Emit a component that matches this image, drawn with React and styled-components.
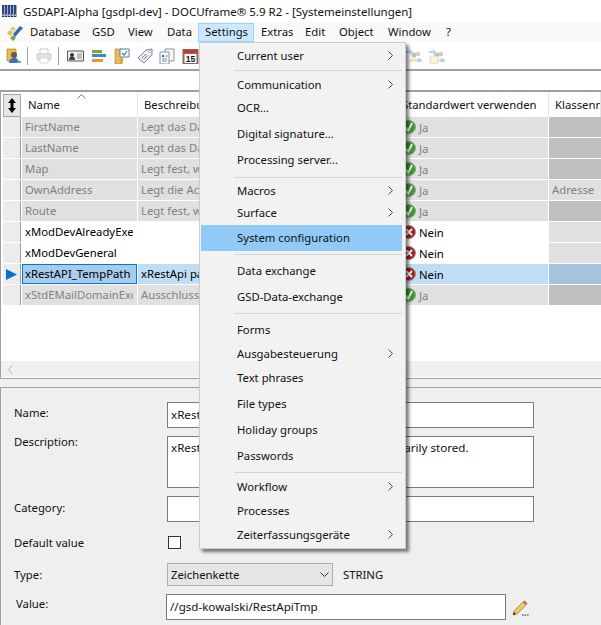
import React from 'react';
import styled, { createGlobalStyle } from 'styled-components';

const GlobalStyle = createGlobalStyle`
  html, body {
    margin: 0;
    padding: 0;
    background: #fff;
  }
  body {
    font-family: "Noto Sans", "Open Sans", sans-serif;
    font-size: 11.3px;
    color: #111;
  }
`;

const Page = styled.div`
  position: relative;
  width: 601px;
  height: 625px;
  overflow: hidden;
  display: flex;
  flex-direction: column;
  background: #fff;
`;

const TitleBar = styled.div`
  height: 22px;
  display: flex;
  align-items: center;
  gap: 6px;
  padding-left: 2px;
  font-size: 11.5px;
  white-space: nowrap;
`;

const MenuBar = styled.div`
  height: 19px;
  padding-top: 1px;
  display: flex;
  padding-left: 6px;
  background: #f9f9f9;
`;

const AppMenuIcon = styled.div`
  width: 17px;
  display: flex;
  align-items: center;
`;

const MenuBarItem = styled.div`
  width: ${(p) => p.$width}px;
  height: 19px;
  box-sizing: border-box;
  padding-left: ${(p) => (p.$open ? 6 : 7)}px;
  line-height: ${(p) => (p.$open ? 16 : 18)}px;
  white-space: nowrap;
  background: ${(p) => (p.$open ? '#cce8ff' : 'transparent')};
  border: ${(p) => (p.$open ? '1px solid #99d1ff' : 'none')};
`;

const Toolbar = styled.div`
  height: 27px;
  display: flex;
  align-items: center;
  padding-left: 6px;
  border-bottom: 2px solid #a0a0a0;
`;

const ToolIcon = styled.div`
  width: 16px;
  height: 16px;
  margin-right: ${(p) => p.$after ?? 7}px;
  margin-left: ${(p) => p.$before ?? 0}px;
  opacity: ${(p) => (p.$faded ? 0.45 : 1)};
  flex: none;
`;

const ToolSep = styled.div`
  width: 1px;
  height: 18px;
  background: #a0a0a0;
  margin-right: 8px;
  flex: none;
`;

const FilterBand = styled.div`
  height: 19px;
  border-bottom: 2px solid #a0a0a0;
`;

const GridArea = styled.div`
  flex: none;
  height: 287px;
  display: flex;
  flex-direction: column;
  border-left: 1px solid #a0a0a0;
  border-bottom: 1px solid #a0a0a0;
  box-sizing: border-box;
  padding: 0 0 1px 2px;
`;

const HeaderRow = styled.div`
  height: 25px;
  display: flex;
  align-items: stretch;
`;

const Corner = styled.div`
  width: 18px;
  height: 23px;
  margin-top: 2px;
  box-sizing: border-box;
  margin-right: 1px;
  background: #e6e6e6;
  border: 1px solid #a6a6a6;
  display: flex;
  align-items: center;
  justify-content: center;
`;

const HeaderCell = styled.div`
  position: relative;
  width: ${(p) => p.$width}px;
  flex: none;
  box-sizing: border-box;
  padding-left: ${(p) => p.$pad ?? 6}px;
  line-height: 26px;
  border-right: 1px solid #e4e4e4;
  white-space: nowrap;
  overflow: hidden;
`;

const SortMark = styled.svg`
  position: absolute;
  left: 55px;
  top: 2px;
`;

const Row = styled.div`
  height: 20px;
  margin-bottom: 1px;
  display: flex;
  color: ${(p) => (p.$muted ? '#808080' : '#000')};
`;

const RowHead = styled.div`
  width: 18px;
  flex: none;
  margin-right: 1px;
  box-sizing: border-box;
  background: #ececec;
  border-right: 1px solid #a0a0a0;
  display: flex;
  align-items: center;
  justify-content: center;
`;

const rowBg = (p) => {
  if (p.$selected) return '#bfddf5';
  return p.$muted ? '#e0e0e0' : '#fff';
};

const Cell = styled.div`
  width: ${(p) => p.$width}px;
  flex: none;
  box-sizing: border-box;
  margin-right: 1px;
  padding-left: 3px;
  line-height: 19px;
  background: ${rowBg};
  white-space: nowrap;
  overflow: hidden;
`;

const NameCell = styled(Cell)`
  ${(p) => p.$selected && 'background: #a6cbec; outline: 1px solid #0078d7; outline-offset: -1px;'}
`;

const NameText = styled.div`
  width: 108px;
  overflow: hidden;
`;

const FlagCell = styled(Cell)`
  display: flex;
  align-items: center;
  padding-left: 3px;
  gap: 3px;
`;

const ClassCell = styled.div`
  flex: 1;
  padding-left: 3px;
  line-height: 19px;
  background: ${(p) => {
    if (p.$selected) return '#a5c4dc';
    return p.$muted ? (p.$filled ? '#e0e0e0' : '#c0c0c0') : '#e0e0e0';
  }};
`;

const GridBody = styled.div`
  flex: 1;
`;

const ScrollBar = styled.div`
  height: 16px;
  margin-left: -2px;
  background: #f0f0f0;
  display: flex;
  align-items: center;
  padding-left: 7px;
`;

const SplitBand = styled.div`
  height: 8px;
  background: #f0f0f0;
`;

const Panel = styled.div`
  flex: 1;
  background: #efefef;
  border-top: 1px solid #a0a0a0;
  border-left: 1px solid #a0a0a0;
  padding: 14px 0 0 13px;
  display: flex;
  flex-direction: column;
`;

const FormRow = styled.div`
  display: flex;
  align-items: flex-start;
  margin-top: ${(p) => p.$top ?? 8}px;
  ${(p) => p.$height && `height: ${p.$height}px;`}
`;

const Label = styled.div`
  width: ${(p) => p.$width ?? 153}px;
  margin-left: ${(p) => p.$indent ?? 0}px;
  margin-top: ${(p) => p.$offset ?? 0}px;
  line-height: 16px;
  flex: none;
`;

const Field = styled.div`
  width: ${(p) => p.$width ?? 367}px;
  height: ${(p) => p.$height ?? 26}px;
  box-sizing: border-box;
  padding: ${(p) => (p.$multi ? '3px' : '0 3px')};
  font-size: 11.6px;
  line-height: ${(p) => (p.$multi ? '16px' : '24px')};
  background: #fff;
  border: 1px solid #7a7a7a;
  white-space: nowrap;
  overflow: hidden;
  flex: none;
`;

const CheckBox = styled.div`
  width: 13px;
  height: 13px;
  margin-left: 1px;
  box-sizing: border-box;
  background: #fff;
  border: 1px solid #333;
`;

const Select = styled.div`
  width: 166px;
  height: 23px;
  box-sizing: border-box;
  padding: 0 3px;
  background: #e5e5e5;
  border: 1px solid #adadad;
  display: flex;
  justify-content: space-between;
  align-items: center;
`;

const TypeValue = styled.div`
  margin-left: 10px;
  line-height: 23px;
`;

const PencilSlot = styled.div`
  margin: 6px 0 0 6px;
  width: 17px;
  height: 17px;
`;

const Menu = styled.div`
  position: absolute;
  left: 199px;
  top: 42px;
  width: 207px;
  height: 507px;
  box-sizing: border-box;
  padding: 1px 2px 0 1px;
  background: #f2f2f2;
  border: 1px solid #cccccc;
  box-shadow: 3px 3px 3px rgba(0, 0, 0, 0.5);
`;

const MenuItem = styled.div`
  height: ${(p) => p.$height}px;
  margin-top: ${(p) => p.$top ?? 0}px;
  box-sizing: border-box;
  display: flex;
  align-items: center;
  justify-content: space-between;
  padding: 0 9px ${(p) => (p.$active ? 1 : 0)}px 36px;
  margin-right: 1px;
  background: ${(p) => (p.$active ? '#91c9f7' : 'transparent')};
  white-space: nowrap;
`;

const MenuSep = styled.div`
  height: 1px;
  margin: ${(p) => p.$top}px 1px ${(p) => p.$bottom}px 33px;
  background: #d4d4d4;
`;

const AppLogo = () => (
  <svg width="15" height="13" viewBox="0 0 15 13">
    {[0, 3, 6, 9, 12].map((x) => (
      <g key={x}>
        <rect x={x} y="0" width="2.400" height="12" fill="#1c2c68" />
        <rect x={x + 0.5} y="1" width="1" height="9" fill="#3d64b4" />
        <rect x={x + 0.5} y="9.500" width="1.400" height="1.500" fill="#e4ecf8" />
      </g>
    ))}
  </svg>
);

const MenuLogo = () => (
  <svg width="17" height="17" viewBox="0 0 17 17">
    <path d="M1 9l3-3 3 3-3 3z" fill="#e3bf35" />
    <path d="M4 14l3-3 3 3-3 3z" fill="#7ba640" />
    <path d="M7 10l7-8 3 2-8 9z" fill="#3a66b8" />
    <path d="M4 5l3-3 3 3-3 3z" fill="#dccf8a" />
  </svg>
);

const PersonFolderIcon = () => (
  <svg width="16" height="16" viewBox="0 0 16 16">
    <path d="M1 1h9v12H1z" fill="#e8bc52" stroke="#a87f24" strokeWidth="0.7" />
    <circle cx="8" cy="7" r="3" fill="#6f5a48" />
    <path d="M3 15c0-4 3-5 5-5s5 1 5 5z" fill="#3c6fc0" />
    <path d="M11 13h4v2h-4z" fill="#5b9be0" />
  </svg>
);

const PrinterIcon = () => (
  <svg width="16" height="16" viewBox="0 0 16 16">
    <path d="M4 1h8v5H4z" fill="#fff" stroke="#7f8c99" />
    <path d="M1 6h14v6H1z" fill="#b6c0ca" stroke="#7f8c99" strokeWidth="0.7" />
    <path d="M4 10h8v5H4z" fill="#fff" stroke="#7f8c99" strokeWidth="0.7" />
  </svg>
);

const CardIcon = () => (
  <svg width="17" height="16" viewBox="0 0 17 16">
    <path d="M0.500 3h16v10H0.500z" fill="#f4f4f4" stroke="#555" />
    <circle cx="5" cy="7" r="2" fill="#333" />
    <path d="M2 12c0-3 1.500-3.500 3-3.500S8 9 8 12z" fill="#444" />
    <path d="M10 6h5M10 8h5M10 10h5" stroke="#8a8a8a" />
  </svg>
);

const BarsIcon = () => (
  <svg width="16" height="16" viewBox="0 0 16 16">
    <path d="M1 2h10v3H1z" fill="#7ea82e" />
    <path d="M1 6h14v3H1z" fill="#2a8fd8" />
    <path d="M1 11h11v3H1z" fill="#e89a24" />
  </svg>
);

const CheckFolderIcon = () => (
  <svg width="16" height="16" viewBox="0 0 16 16">
    <path d="M1 1h7v15H1z" fill="#e6bd5c" stroke="#b08a30" strokeWidth="0.7" />
    <path d="M6 1h9v8H6z" fill="#fff" stroke="#5f7f9f" />
    <path d="M8 5l2 2 3-4" fill="none" stroke="#2a7fd0" strokeWidth="1.200" />
    <path d="M6 9h3v6H6z" fill="#d9a93e" />
  </svg>
);

const TagIcon = () => (
  <svg width="16" height="16" viewBox="0 0 16 16">
    <path d="M1 10l8-8 6-1v6l-8 8z" fill="#e9edf2" stroke="#7d8894" />
    <circle cx="12.500" cy="3.500" r="1" fill="#fff" stroke="#7d8894" strokeWidth="0.6" />
    <path d="M5 10l4-4M6.500 11.500l4-4" stroke="#7d8894" />
  </svg>
);

const DocsIcon = () => (
  <svg width="16" height="16" viewBox="0 0 16 16">
    <path d="M6 1h9v12H6z" fill="#f4f6f8" stroke="#8a949e" />
    <path d="M1 4h9v12H1z" fill="#fff" stroke="#8a949e" />
    <path d="M3 7h2v2H3z" fill="#2a6fc0" />
    <path d="M3 11h5M3 13h5M6 8h3" stroke="#5f96c8" />
  </svg>
);

const CalendarIcon = () => (
  <svg width="17" height="16" viewBox="0 0 17 16">
    <path d="M0.500 1h16v15h-16z" fill="#8a6a52" />
    <path d="M1.500 2h14v3h-14z" fill="#c23a3a" />
    <path d="M2.500 6h12v9h-12z" fill="#fff" />
    <text x="8.500" y="14" fontSize="8.500" fontWeight="700" textAnchor="middle" fill="#111" fontFamily="Liberation Sans">15</text>
  </svg>
);

const UsersIcon = ({ note }) => (
  <svg width="16" height="16" viewBox="0 0 16 16">
    <path d="M0 3h4V1l3 3-3 3V5H0z" fill="#5b9be0" />
    <circle cx="8" cy="7" r="2.500" fill="#8a6a4a" />
    <circle cx="12" cy="6" r="2.200" fill="#a58a70" />
    <path d="M4 14c0-3 2-4 4-4s4 1 4 4z" fill="#e8c878" />
    <path d="M11 14c0-3 1-4 2-4s3 1 3 4z" fill="#5b9be0" />
    {note && <path d="M1 8h8v8H1z" fill="#f3e3a8" stroke="#b8a060" strokeWidth="0.7" />}
  </svg>
);

const SortArrows = () => (
  <svg width="10" height="15" viewBox="0 0 10 15">
    <path d="M5 0l4 5H6.500v5H9l-4 5-4-5h2.500V5H1z" fill="#000" />
  </svg>
);

const CurrentRowArrow = () => (
  <svg width="11" height="11" viewBox="0 0 11 11">
    <path d="M0 0l11 5.500L0 11z" fill="#0a6fd8" />
  </svg>
);

const YesIcon = () => (
  <svg width="14" height="14" viewBox="0 0 14 14">
    <circle cx="7" cy="7" r="6.500" fill="#38a028" stroke="#9a9a9a" />
    <path d="M4 7.500l2 3.500 4-8" fill="none" stroke="#fff" strokeWidth="1.800" />
  </svg>
);

const NoIcon = () => (
  <svg width="14" height="14" viewBox="0 0 14 14">
    <circle cx="7" cy="7" r="6.500" fill="#a81c28" stroke="#9a9a9a" />
    <path d="M4 4l6 6M10 4l-6 6" stroke="#fff" strokeWidth="2" />
  </svg>
);

const Chevron = ({ left, color = '#444' }) => (
  <svg width="5" height="9" viewBox="0 0 5 9">
    <path d={left ? 'M4.500 0.500l-4 4 4 4' : 'M0.500 0.500l4 4-4 4'} fill="none" stroke={color} />
  </svg>
);

const Pencil = () => (
  <svg width="17" height="17" viewBox="0 0 17 17">
    <path d="M1 15l1-4 9-9 3 3-9 9z" fill="#f2cd5a" stroke="#8a7232" strokeWidth="0.7" />
    <path d="M11 2l1.500-1.500 3 3L14 5z" fill="#d8605c" />
    <path d="M1 15l1-3 2 2z" fill="#333" />
    <path d="M10 15h1.500M12.500 15H14M15 15h1.500" stroke="#222" />
  </svg>
);

const menuBarItems = [
  { label: 'Database', width: 62 },
  { label: 'GSD', width: 36 },
  { label: 'View', width: 39 },
  { label: 'Data', width: 38 },
  { label: 'Settings', width: 56, open: true },
  { label: 'Extras', width: 44 },
  { label: 'Edit', width: 34 },
  { label: 'Object', width: 49 },
  { label: 'Window', width: 58 },
  { label: '?', width: 20 },
];

const rows = [
  { name: 'FirstName', desc: 'Legt das Da', muted: true, yes: true },
  { name: 'LastName', desc: 'Legt das Da', muted: true, yes: true },
  { name: 'Map', desc: 'Legt fest, w', muted: true, yes: true },
  { name: 'OwnAddress', desc: 'Legt die Ac', muted: true, yes: true, className: 'Adresse' },
  { name: 'Route', desc: 'Legt fest, w', muted: true, yes: true },
  { name: 'xModDevAlreadyExecuted', desc: '' },
  { name: 'xModDevGeneral', desc: '' },
  { name: 'xRestAPI_TempPath', desc: 'xRestApi pa', selected: true },
  { name: 'xStdEMailDomainExclude', desc: 'Ausschluss', muted: true, yes: true },
];

const menuEntries = [
  { label: 'Current user', height: 22, sub: true },
  { sep: true, top: 4, bottom: 2 },
  { label: 'Communication', height: 22, sub: true },
  { label: 'OCR...', height: 25 },
  { label: 'Digital signature...', height: 26 },
  { label: 'Processing server...', height: 26 },
  { sep: true, top: 5, bottom: 1 },
  { label: 'Macros', height: 22, sub: true },
  { label: 'Surface', height: 22, sub: true },
  { label: 'System configuration', height: 26, active: true, top: 2 },
  { sep: true, top: 3, bottom: 2 },
  { label: 'Data exchange', height: 26 },
  { label: 'GSD-Data-exchange', height: 26 },
  { sep: true, top: 4, bottom: 3 },
  { label: 'Forms', height: 25 },
  { label: 'Ausgabesteuerung', height: 22, sub: true },
  { label: 'Text phrases', height: 26 },
  { label: 'File types', height: 26 },
  { label: 'Holiday groups', height: 26 },
  { label: 'Passwords', height: 26 },
  { sep: true, top: 4, bottom: 2 },
  { label: 'Workflow', height: 22, sub: true },
  { label: 'Processes', height: 26 },
  { label: 'Zeiterfassungsgeräte', height: 22, sub: true },
];

const App = () => {
  return (
    <Page>
      <GlobalStyle />
      <TitleBar>
        <AppLogo />
        <span>GSDAPI-Alpha [gsdpl-dev] - DOCUframe® 5.9 R2 - [Systemeinstellungen]</span>
      </TitleBar>
      <MenuBar>
        <AppMenuIcon>
          <MenuLogo />
        </AppMenuIcon>
        {menuBarItems.map((item) => (
          <MenuBarItem key={item.label} $width={item.width} $open={item.open}>
            {item.label}
          </MenuBarItem>
        ))}
      </MenuBar>
      <Toolbar>
        <ToolIcon $after={5}><PersonFolderIcon /></ToolIcon>
        <ToolSep />
        <ToolIcon $faded $after={6}><PrinterIcon /></ToolIcon>
        <ToolSep />
        <ToolIcon $after={8}><CardIcon /></ToolIcon>
        <ToolIcon><BarsIcon /></ToolIcon>
        <ToolIcon><CheckFolderIcon /></ToolIcon>
        <ToolIcon $after={6}><TagIcon /></ToolIcon>
        <ToolIcon><DocsIcon /></ToolIcon>
        <ToolIcon><CalendarIcon /></ToolIcon>
        <ToolIcon $faded $before={201}><UsersIcon /></ToolIcon>
        <ToolIcon $faded><UsersIcon note /></ToolIcon>
      </Toolbar>
      <FilterBand />
      <GridArea>
        <HeaderRow>
          <Corner><SortArrows /></Corner>
          <HeaderCell $width={116}>
            Name
            <SortMark width="9" height="5" viewBox="0 0 9 5">
              <path d="M0.500 4.500l4-4 4 4" fill="none" stroke="#777" />
            </SortMark>
          </HeaderCell>
          <HeaderCell $width={261}>Beschreibung</HeaderCell>
          <HeaderCell $width={150} $pad={3}>Standardwert verwenden</HeaderCell>
          <HeaderCell $width={52}>Klassenname</HeaderCell>
        </HeaderRow>
        <GridBody>
          {rows.map((row) => (
            <Row key={row.name} $muted={row.muted}>
              <RowHead>{row.selected && <CurrentRowArrow />}</RowHead>
              <NameCell $width={115} $muted={row.muted} $selected={row.selected}>
                <NameText>{row.name}</NameText>
              </NameCell>
              <Cell $width={260} $muted={row.muted} $selected={row.selected}>{row.desc}</Cell>
              <FlagCell $width={149} $muted={row.muted} $selected={row.selected}>
                {row.yes ? <YesIcon /> : <NoIcon />}
                {row.yes ? 'Ja' : 'Nein'}
              </FlagCell>
              <ClassCell $muted={row.muted} $selected={row.selected} $filled={row.className}>
                {row.className}
              </ClassCell>
            </Row>
          ))}
        </GridBody>
        <ScrollBar><Chevron left color="#b0b0b0" /></ScrollBar>
      </GridArea>
      <SplitBand />
      <Panel>
        <FormRow $top={0}>
          <Label $offset={3}>Name:</Label>
          <Field>xRestAPI_TempPath</Field>
        </FormRow>
        <FormRow>
          <Label $offset={-2}>Description:</Label>
          <Field $height={52} $multi>xRestApi path in which the files are temporarily stored.</Field>
        </FormRow>
        <FormRow>
          <Label $offset={4}>Category:</Label>
          <Field />
        </FormRow>
        <FormRow $top={14} $height={13}>
          <Label $offset={-1}>Default value</Label>
          <CheckBox />
        </FormRow>
        <FormRow $top={14}>
          <Label $offset={4}>Type:</Label>
          <Select>
            Zeichenkette
            <svg width="9" height="6" viewBox="0 0 9 6">
              <path d="M0.500 0.500l4 4 4-4" fill="none" stroke="#333" />
            </svg>
          </Select>
          <TypeValue>STRING</TypeValue>
        </FormRow>
        <FormRow>
          <Label $offset={2} $indent={2} $width={150}>Value:</Label>
          <Field $width={340}>//gsd-kowalski/RestApiTmp</Field>
          <PencilSlot><Pencil /></PencilSlot>
        </FormRow>
      </Panel>
      <Menu>
        {menuEntries.map((entry, index) =>
          entry.sep ? (
            <MenuSep key={index} $top={entry.top} $bottom={entry.bottom} />
          ) : (
            <MenuItem key={entry.label} $height={entry.height} $active={entry.active} $top={entry.top}>
              {entry.label}
              {entry.sub && <Chevron />}
            </MenuItem>
          )
        )}
      </Menu>
    </Page>
  );
};

export default App;
